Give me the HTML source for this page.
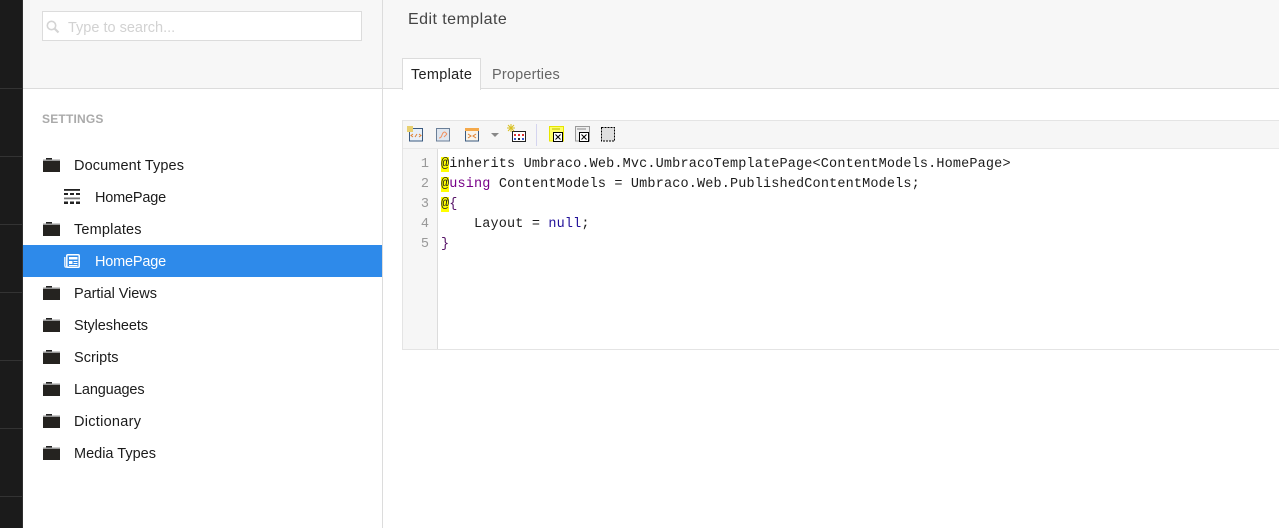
<!DOCTYPE html>
<html><head><meta charset="utf-8">
<style>
html,body{margin:0;padding:0;background:#fff}
#p{position:relative;width:1279px;height:528px;overflow:hidden;background:#fff;font-family:"Liberation Sans",sans-serif;color:#1b1b1b}
#p div,#p svg{position:absolute}
.t{font-size:14.5px;line-height:20px;white-space:nowrap}
.l{left:0;width:22px;height:1px;background:#333}
.f{left:43px;width:17px;height:15px}
.c{font-family:"Liberation Mono",monospace;font-size:13.5px;line-height:20px;letter-spacing:.155px;white-space:pre;left:441px;color:#1c1c1c}
.n{font-family:"Liberation Mono",monospace;font-size:13.5px;line-height:20px;left:403px;width:26px;text-align:right;color:#999}
.at{background:#ff0}
.kw{color:#708}.nu{color:#219}.br{color:#516}
</style></head><body>
<div id="p">
<div style="left:0;top:0;width:22px;height:528px;background:#1b1b1b"></div>
<div style="left:22px;top:0;width:1px;height:528px;background:#2f2f2f"></div>
<div class="l" style="top:88px"></div><div class="l" style="top:156px"></div><div class="l" style="top:224px"></div><div class="l" style="top:292px"></div><div class="l" style="top:360px"></div><div class="l" style="top:428px"></div><div class="l" style="top:496px"></div>

<div style="left:23px;top:0;width:359px;height:88px;background:#f7f7f7"></div>
<div style="left:383px;top:0;width:896px;height:88px;background:#f7f7f7"></div>
<div style="left:23px;top:88px;width:1256px;height:1px;background:#dcdcdc"></div>
<div style="left:382px;top:0;width:1px;height:528px;background:#dcdcdc"></div>

<div style="left:42px;top:11px;width:318px;height:28px;background:#fff;border:1px solid #dcdcdc"></div>
<svg style="left:46px;top:20px" width="14" height="14" viewBox="0 0 14 14"><circle cx="5.500" cy="5.500" r="4.200" fill="none" stroke="#d4d4d4" stroke-width="1.600"/><path d="M8.500 8.500l4 4" stroke="#d4d4d4" stroke-width="2.200"/></svg>
<div class="t" style="left:68px;top:18px;color:#d2d2d2">Type to search...</div>

<div style="left:42px;top:111px;font-size:12px;line-height:16px;font-weight:bold;color:#aaa;letter-spacing:.2px">SETTINGS</div>

<svg class="f" style="top:157px" viewBox="0 0 17 15"><path d="M0 2.500h17V4H0z" fill="#999"/><path d="M3 1h6v1.500H3z" fill="#222"/><rect y="4" width="17" height="11" fill="#252320"/></svg>
<div class="t" style="left:74px;top:156px;letter-spacing:.11px">Document Types</div>
<svg style="left:64px;top:189px" width="16" height="15" viewBox="0 0 16 15"><rect width="16" height="1.800" y="0" fill="#222"/><path d="M0 4h4v2H0zM6 4h4v2H6zM12 4h4v2h-4z" fill="#222"/><rect y="8.500" width="16" height="1.800" fill="#777"/><path d="M0 12.500h4V15H0zM6 12.500h4V15H6zM12 12.500h4V15h-4z" fill="#222"/></svg>
<div class="t" style="left:95px;top:188px;letter-spacing:-.2px">HomePage</div>

<svg class="f" style="top:221px" viewBox="0 0 17 15"><path d="M0 2.500h17V4H0z" fill="#999"/><path d="M3 1h6v1.500H3z" fill="#222"/><rect y="4" width="17" height="11" fill="#252320"/></svg>
<div class="t" style="left:74px;top:220px;letter-spacing:.18px">Templates</div>

<div style="left:23px;top:245px;width:359px;height:32px;background:#2e8aea"></div>
<svg style="left:64px;top:254px" width="16" height="14" viewBox="0 0 16 14"><rect x="2.800" y=".8" width="12.400" height="12.400" rx="1" fill="#2e8aea" stroke="#fff" stroke-width="1.500"/><path d="M.8 3v8.500q0 1.700 1.700 1.700" fill="none" stroke="#dcebfb" stroke-width="1.500"/><path d="M5 3h8.500v2.500H5zM5 7h3.500v3H5zM9.500 7h4v1h-4zM9.500 9h4v1h-4zM5 11h8.500v1H5z" fill="#fff"/></svg>
<div class="t" style="left:95px;top:252px;color:#fff;letter-spacing:-.2px">HomePage</div>

<svg class="f" style="top:285px" viewBox="0 0 17 15"><path d="M0 2.500h17V4H0z" fill="#999"/><path d="M3 1h6v1.500H3z" fill="#222"/><rect y="4" width="17" height="11" fill="#252320"/></svg>
<div class="t" style="left:74px;top:284px;letter-spacing:-.05px">Partial Views</div>
<svg class="f" style="top:317px" viewBox="0 0 17 15"><path d="M0 2.500h17V4H0z" fill="#999"/><path d="M3 1h6v1.500H3z" fill="#222"/><rect y="4" width="17" height="11" fill="#252320"/></svg>
<div class="t" style="left:74px;top:316px;letter-spacing:-.09px">Stylesheets</div>
<svg class="f" style="top:349px" viewBox="0 0 17 15"><path d="M0 2.500h17V4H0z" fill="#999"/><path d="M3 1h6v1.500H3z" fill="#222"/><rect y="4" width="17" height="11" fill="#252320"/></svg>
<div class="t" style="left:74px;top:348px;letter-spacing:.04px">Scripts</div>
<svg class="f" style="top:381px" viewBox="0 0 17 15"><path d="M0 2.500h17V4H0z" fill="#999"/><path d="M3 1h6v1.500H3z" fill="#222"/><rect y="4" width="17" height="11" fill="#252320"/></svg>
<div class="t" style="left:74px;top:380px;letter-spacing:-.15px">Languages</div>
<svg class="f" style="top:413px" viewBox="0 0 17 15"><path d="M0 2.500h17V4H0z" fill="#999"/><path d="M3 1h6v1.500H3z" fill="#222"/><rect y="4" width="17" height="11" fill="#252320"/></svg>
<div class="t" style="left:74px;top:412px;letter-spacing:.28px">Dictionary</div>
<svg class="f" style="top:445px" viewBox="0 0 17 15"><path d="M0 2.500h17V4H0z" fill="#999"/><path d="M3 1h6v1.500H3z" fill="#222"/><rect y="4" width="17" height="11" fill="#252320"/></svg>
<div class="t" style="left:74px;top:444px">Media Types</div>

<div style="left:408px;top:9px;font-size:16px;line-height:22px;color:#444;letter-spacing:.45px;white-space:nowrap">Edit template</div>
<div style="left:402px;top:58px;width:77px;height:31px;background:#fff;border:1px solid #dcdcdc;border-bottom:0"></div>
<div class="t" style="left:411px;top:65px;color:#222;letter-spacing:.3px">Template</div>
<div class="t" style="left:492px;top:65px;color:#666;letter-spacing:.18px">Properties</div>

<div style="left:402px;top:120px;width:877px;height:228px;border:1px solid #e4e4e4;border-right:0;background:#fff"></div>
<div style="left:403px;top:121px;width:876px;height:27px;background:#f6f6f6;border-bottom:1px solid #e8e8e8"></div>
<div style="left:403px;top:149px;width:34px;height:200px;background:#f6f6f6;border-right:1px solid #dcdcdc"></div>

<svg style="left:405px;top:124px" width="215" height="22" viewBox="0 0 215 22">
<rect x="4.500" y="4.500" width="13" height="12.500" fill="#e8f0f8" stroke="#3a5a80"/><rect x="2" y="2" width="6" height="6" fill="#e8d070"/><path d="M8 10l-2 1.500 2 1.500M10 13l2-3M14 10l2 1.500-2 1.500" fill="none" stroke="#e08030"/>
<rect x="31.500" y="4.500" width="13" height="12.500" fill="#dfe6ef" stroke="#6a7f98"/><path d="M34 14c4 0 2-6 6-6M40 8l2 2M39 13l3-3" fill="none" stroke="#f09060"/>
<rect x="60.500" y="4.500" width="13" height="12.500" fill="#f8f4ea" stroke="#3a5a80"/><rect x="60" y="4" width="14" height="3" fill="#f5a94a"/><path d="M63 10l3 2-3 2M71 10l-3 2 3 2" fill="none" stroke="#e08030"/>
<path d="M86 9h8l-4 4z" fill="#888"/>
<rect x="107.500" y="7.500" width="13" height="10" fill="#fff" stroke="#222"/><path d="M109 10h2v2h-2zM113 10h2v2h-2zM117 10h2v2h-2z" fill="#d33"/><path d="M109 14h2v2h-2zM117 14h2v2h-2z" fill="#35c"/><path d="M113 14h2v2h-2z" fill="#222"/><path d="M106 0v8M102 4h8M103 1l6 6M109 1l-6 6" stroke="#d8c020"/>
<rect x="131" y="0" width="1" height="22" fill="#d4d4ef"/>
<rect x="144.500" y="2.500" width="14" height="14.500" fill="#ffff66" stroke="#e6e600"/><path d="M147 5h8" stroke="#b8b800"/><rect x="148.500" y="8.500" width="9" height="9" fill="#fff" stroke="#000"/><path d="M150.500 10.500l5 5M155.500 10.500l-5 5" stroke="#000"/>
<rect x="170.500" y="2.500" width="14" height="14.500" fill="#eee" stroke="#999"/><path d="M172 5h9" stroke="#888"/><rect x="174.500" y="8.500" width="9" height="9" fill="#fff" stroke="#000"/><path d="M176.500 10.500l5 5M181.500 10.500l-5 5" stroke="#000"/>
<rect x="196.500" y="3.500" width="13" height="13.500" fill="#e0e0e0" stroke="#000" stroke-dasharray="2 1"/>
</svg>

<div class="n" style="top:155px">1</div><div class="n" style="top:175px">2</div><div class="n" style="top:195px">3</div><div class="n" style="top:215px">4</div><div class="n" style="top:235px">5</div>
<div class="c" style="top:155px"><span class="at">@</span>inherits Umbraco.Web.Mvc.UmbracoTemplatePage&lt;ContentModels.HomePage&gt;</div>
<div class="c" style="top:175px"><span class="at">@</span><span class="kw">using</span> ContentModels = Umbraco.Web.PublishedContentModels;</div>
<div class="c" style="top:195px"><span class="at">@</span><span class="br">{</span></div>
<div class="c" style="top:215px">    Layout = <span class="nu">null</span>;</div>
<div class="c" style="top:235px"><span class="br">}</span></div>
</div>
</body></html>
